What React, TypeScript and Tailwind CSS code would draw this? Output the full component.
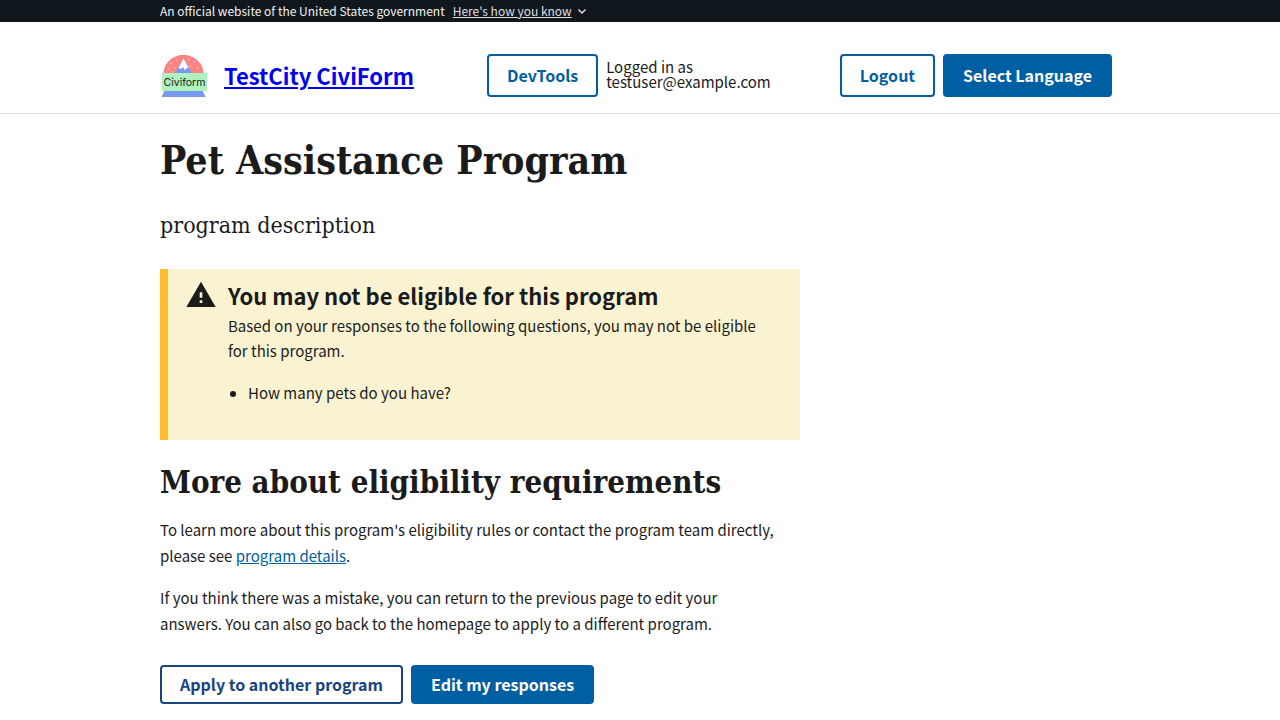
import type { ButtonHTMLAttributes } from "react";

type ActionButtonProps = ButtonHTMLAttributes<HTMLButtonElement> & {
  tone: "solid" | "outline" | "navy";
  size: "tall" | "regular";
};

const tones = {
  solid: "border-[#005ea2] bg-[#005ea2] text-white",
  outline: "border-[#005ea2] bg-white text-[#005ea2]",
  navy: "border-[#1a4480] bg-white text-[#1a4480]",
};

const sizes = {
  tall: "h-[43px]",
  regular: "h-[39px]",
};

function ActionButton({ tone, size, children, ...rest }: ActionButtonProps) {
  return (
    <button
      type="button"
      className={`shrink-0 cursor-pointer whitespace-nowrap rounded border-2 px-[18px] pb-0.5 text-base leading-4 font-bold ${tones[tone]} ${sizes[size]}`}
      {...rest}
    >
      {children}
    </button>
  );
}

function Logo() {
  return (
    <svg viewBox="0 0 96 96" className="size-12 shrink-0" role="img" aria-label="Civiform">
      <path d="M7 44C7 22 25 6 47 6s40 16 40 38z" fill="#fa8383" />
      <g fill="#ffdede">
        <circle cx="18" cy="34" r="1.4" />
        <circle cx="22" cy="23" r="1.4" />
        <circle cx="31" cy="32" r="1.4" />
        <circle cx="34" cy="17" r="1.4" />
        <circle cx="57" cy="15" r="1.4" />
        <circle cx="62" cy="28" r="1.4" />
        <circle cx="68" cy="19" r="1.4" />
        <circle cx="75" cy="32" r="1.4" />
        <circle cx="25" cy="40" r="1.4" />
      </g>
      <path d="M30 43 47 13l17 30z" fill="#7799f2" />
      <path d="m47 13 11 20-4-2-4 6-4-7-4 4-5-2z" fill="#fff" />
      <path d="M9 77h76l6 13H3z" fill="#7799f2" />
      <path d="M4 42h90v36H4z" fill="#aff2bd" />
      <text x="49" y="68" textAnchor="middle" className="fill-[#1b1b1b] font-['Inter',sans-serif] text-[21px]">
        Civiform
      </text>
    </svg>
  );
}

export default function App() {
  return (
    <div className="min-h-screen bg-white font-['Noto_Sans_CJK_SC',sans-serif] text-[15px] text-[#1b1b1b]">
      <section aria-label="Official government website" className="bg-[#11181d] text-[#f0f0f0]">
        <div className="mx-auto flex h-[22px] max-w-[1024px] items-center gap-2 px-8 text-[12px] leading-4">
          <p>An official website of the United States government</p>
          <button type="button" aria-expanded="false" className="flex cursor-pointer items-center gap-1 text-[#dcdee0]">
            <span className="underline">Here's how you know</span>
            <svg viewBox="0 0 12 12" className="size-3" aria-hidden="true">
              <path d="m2.5 4.5 3.5 3.5 3.5-3.5" fill="none" stroke="currentColor" strokeWidth="1.5" />
            </svg>
          </button>
        </div>
      </section>

      <header className="border-b border-[#dfe1e2]">
        <div className="mx-auto flex h-[91px] max-w-[1024px] items-center px-8 pt-4">
          <div className="flex w-[327px] items-center gap-4">
            <Logo />
            <a
              href="#home"
              className="pb-0.5 text-[22px] leading-8 font-bold whitespace-nowrap text-[#0000ee] underline"
            >
              TestCity CiviForm
            </a>
          </div>
          <div className="flex flex-1 items-center gap-2 pr-2">
            <ActionButton tone="outline" size="tall">DevTools</ActionButton>
            <p className="flex-1 pb-1 leading-[15px]">
              Logged in as
              <br />
              testuser@example.com
            </p>
            <ActionButton tone="outline" size="tall">Logout</ActionButton>
            <ActionButton tone="solid" size="tall">Select Language</ActionButton>
          </div>
        </div>
      </header>

      <main className="mx-auto max-w-[1024px] px-8 pt-5 pb-4">
        <div className="max-w-[640px]">
          <h1 className="font-['DejaVu_Serif_Condensed','DejaVu_Serif',serif] text-[39px] leading-[52px] font-bold">
            Pet Assistance Program
          </h1>
          <p className="mt-5 font-['DejaVu_Serif_Condensed','DejaVu_Serif',serif] text-[23px] leading-[38px]">
            program description
          </p>

          <section className="mt-[25px] flex border-l-8 border-[#ffbe2e] bg-[#faf3d1] pt-[10px] pr-6 pb-[35px] pl-[17px]">
            <svg viewBox="0 0 24 24" className="size-8 shrink-0 fill-[#1b1b1b]" aria-hidden="true">
              <path d="M1 21h22L12 2 1 21zm12-3h-2v-2h2v2zm0-4h-2v-4h2v4z" />
            </svg>
            <div className="ml-[11px]">
              <h2 className="pb-0.5 text-[22px] leading-8 font-bold">You may not be eligible for this program</h2>
              <p className="leading-[25px]">
                Based on your responses to the following questions, you may not be eligible for this program.
              </p>
              <ul className="mt-[17px] list-disc pl-5 leading-[25px]">
                <li>How many pets do you have?</li>
              </ul>
            </div>
          </section>

          <h2 className="mt-5 font-['DejaVu_Serif_Condensed','DejaVu_Serif',serif] text-[31px] leading-[44px] font-bold">
            More about eligibility requirements
          </h2>
          <p className="mt-[13px] leading-[26px]">
            To learn more about this program's eligibility rules or contact the program team directly, please see{" "}
            <a href="#program-details" className="text-[#005ea2] underline">
              program details
            </a>
            .
          </p>
          <p className="mt-4 pr-8 leading-[26px]">
            If you think there was a mistake, you can return to the previous page to edit your answers. You can also go
            back to the homepage to apply to a different program.
          </p>
          <div className="mt-7 flex flex-wrap gap-2">
            <ActionButton tone="navy" size="regular">Apply to another program</ActionButton>
            <ActionButton tone="solid" size="regular">Edit my responses</ActionButton>
          </div>
        </div>
      </main>
    </div>
  );
}
